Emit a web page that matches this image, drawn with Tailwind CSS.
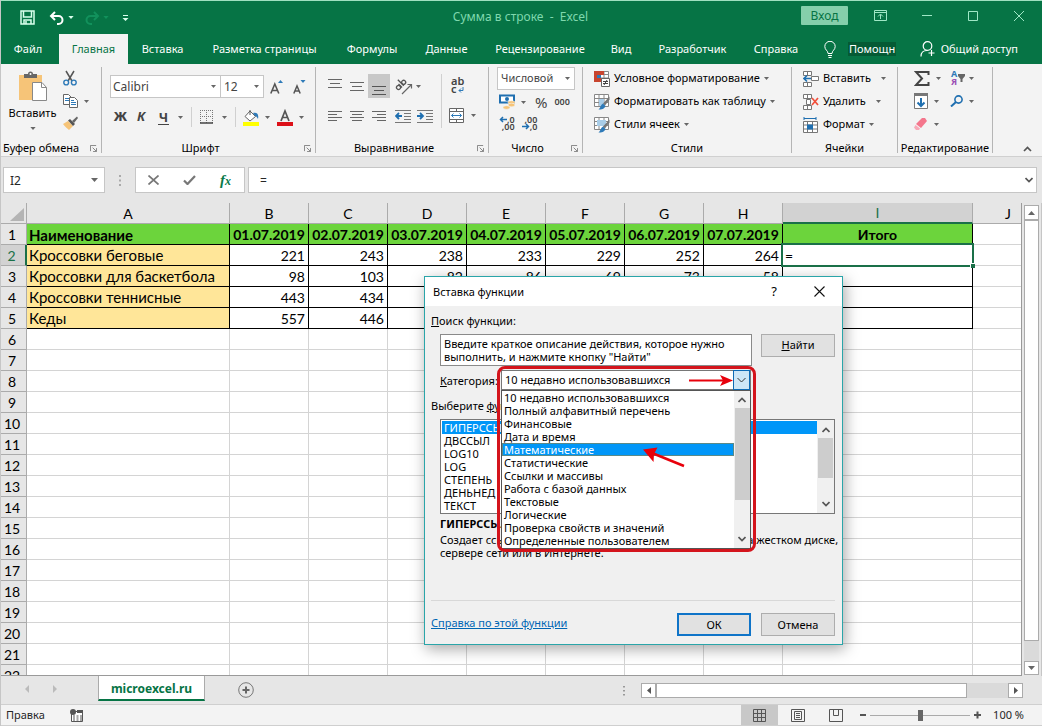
<!DOCTYPE html>
<html lang="ru">
<head>
<meta charset="utf-8">
<title>Сумма в строке - Excel</title>
<script src="https://cdn.jsdelivr.net/npm/@tailwindcss/browser@4"></script>
</head>
<body class="h-screen overflow-hidden bg-[#e6e6e6] font-['Noto_Sans','Open_Sans',sans-serif] text-xs text-[#262626]">

<!-- shared symbols -->
<svg class="hidden">
  <symbol id="caret" viewBox="0 0 7 4"><path d="M0 0h7L3.500 4z" fill="#666"/></symbol>
  <symbol id="launcher" viewBox="0 0 8 8"><path d="M.5 7V.5H7M3 3l4 4M7.500 3.500v4h-4" fill="none" stroke="#777"/></symbol>
  <symbol id="up" viewBox="0 0 8 6"><path d="M.5 5L4 1.500 7.500 5" fill="none" stroke="#555" stroke-width="1.700"/></symbol>
  <symbol id="down" viewBox="0 0 8 6"><path d="M.5 1L4 4.500 7.500 1" fill="none" stroke="#555" stroke-width="1.700"/></symbol>
</svg>

<div class="flex h-full flex-col border-l border-[#c6c6c6]">

  <!-- title bar -->
  <header class="flex-none border-t border-[#9fe0c0] bg-[#067445] text-white">
    <div class="relative flex h-[33px] items-center pl-[19px]">
      <button aria-label="Сохранить"><svg class="h-[15px] w-[15px]" viewBox="0 0 15 15"><path d="M1 1h13v13H1zM3.500 1v6h8V1M4 14v-4h7v4M6 11v3" fill="none" stroke="#d9ffec" stroke-width="1.500"/></svg></button>
      <button aria-label="Отменить" class="ml-[14px]"><svg class="h-[14px] w-[16px]" viewBox="0 0 16 14"><path d="M6 1L2 5l4 4M2 5h7.500a4 4 0 0 1 0 8H8" fill="none" stroke="#fff" stroke-width="2"/></svg></button>
      <svg class="ml-[3px] h-[3px] w-[6px]" viewBox="0 0 7 4"><path d="M0 0h7L3.500 4z" fill="#d9ffec"/></svg>
      <button aria-label="Вернуть" class="ml-[10px]"><svg class="h-[14px] w-[16px]" viewBox="0 0 16 14"><path d="M10 1l4 4-4 4M14 5H6.500a4 4 0 0 0 0 8H8" fill="none" stroke="#12915c" stroke-width="2"/></svg></button>
      <svg class="ml-[3px] h-[3px] w-[6px]" viewBox="0 0 7 4"><path d="M0 0h7L3.500 4z" fill="#12915c"/></svg>
      <button aria-label="Настройка панели" class="ml-[13px]"><svg class="h-[6px] w-[7px]" viewBox="0 0 7 6"><path d="M1 0h5v1H1zM.5 3h6L3.500 6z" fill="#d9ffec"/></svg></button>
      <h1 class="pointer-events-none absolute inset-x-0 top-[8px] pr-[2px] text-center whitespace-pre text-[#7fd8ae]">Сумма в строке  -  Excel</h1>
      <div class="ml-auto flex items-center pb-[4px]">
        <button class="mr-[26px] h-[19px] w-[47px] rounded-[1px] bg-[#85cfab] leading-[18px] text-[#067445]">Вход</button>
        <button aria-label="Параметры ленты" class="mr-[35px]"><svg class="h-[11px] w-[13px]" viewBox="0 0 13 11"><path d="M.5.5h12v10H.5zM.5 2.500h12M6.500 9V4.500M4 6.500l2.500-2.500L9 6.500" fill="none" stroke="#9fe8c6"/></svg></button>
        <button aria-label="Свернуть" class="mr-[36px]"><svg class="h-[11px] w-[10px]" viewBox="0 0 10 11"><path d="M0 5.500h10" stroke="#9fe8c6"/></svg></button>
        <button aria-label="Развернуть" class="mr-[36px]"><svg class="h-[10px] w-[10px]" viewBox="0 0 10 10"><path d="M.5.5h9v9h-9z" fill="none" stroke="#9fe8c6"/></svg></button>
        <button aria-label="Закрыть" class="mr-[18px]"><svg class="h-[10px] w-[10px]" viewBox="0 0 10 10"><path d="M0 0l10 10M10 0L0 10" fill="none" stroke="#9fe8c6"/></svg></button>
      </div>
    </div>
    <nav class="flex h-[30px] items-center text-[11px] whitespace-nowrap">
      <button class="w-[58px] pr-[4px]">Файл</button>
      <button class="h-full w-[69px] bg-[#f3f3f3] text-[#067445]">Главная</button>
      <button class="w-[69px]">Вставка</button>
      <button class="w-[135px]">Разметка страницы</button>
      <button class="w-[80px]">Формулы</button>
      <button class="w-[69px]">Данные</button>
      <button class="w-[118px]">Рецензирование</button>
      <button class="w-[44px]">Вид</button>
      <button class="w-[99px]">Разработчик</button>
      <button class="w-[68px]">Справка</button>
      <button class="ml-[14px] flex items-center gap-[12px]"><svg class="h-[17px] w-[12px]" viewBox="0 0 12 17"><path d="M4 12.500c0-3-3.200-3.500-3.200-7a5.200 5.200 0 0 1 10.400 0c0 3.500-3.200 4-3.200 7zM4 14.500h4M4.500 16.500h3" fill="none" stroke="#fff"/></svg><span class="bg-[#055a34] px-px leading-[14px]">Помощн</span></button>
      <button class="mr-[24px] ml-auto flex items-center gap-[6px]"><svg class="h-[16px] w-[15px]" viewBox="0 0 15 16"><path d="M1 15.500c0-4 2.500-6 6-6M11.500 9v6M8.500 12h6" fill="none" stroke="#fff" stroke-width="1.200"/><circle cx="7.500" cy="5" r="4.300" fill="none" stroke="#fff" stroke-width="1.200"/></svg><span>Общий доступ</span></button>
    </nav>
  </header>

  <!-- ribbon -->
  <section class="flex h-[93px] flex-none items-stretch overflow-hidden border-b border-[#d0d0d0] bg-[#f3f3f3] py-[3px] text-[11px] whitespace-nowrap text-black">

    <div class="flex w-[101px] flex-none flex-col border-r border-[#b5b5b5]">
      <div class="flex flex-1">
        <button class="flex w-[60px] flex-col items-center pt-[4px] pl-[3px]">
          <svg class="h-[32px] w-[30px]" viewBox="0 0 30 32"><path d="M1 4h23v25H1z" fill="#f6c478"/><path d="M6 7V3h4a2.500 2.500 0 0 1 5 0h4v4z" fill="#666"/><circle cx="12.500" cy="3" r="1" fill="#fff"/><path d="M14.500 11.500H24l4.500 5v13h-14z" fill="#fff" stroke="#888"/><path d="M23.500 11.500v5h5" fill="none" stroke="#888"/></svg>
          <span class="leading-[19px]">Вставить</span>
          <svg class="mt-[5px] h-[3px] w-[6px]"><use href="#caret"/></svg>
        </button>
        <div class="flex flex-col gap-[8px] pt-[3px] pl-[2px]">
          <button aria-label="Вырезать"><svg class="h-[16px] w-[14px]" viewBox="0 0 14 16"><path d="M3 1l6 10M11 1L5 11" stroke="#555" stroke-width="1.500" fill="none"/><circle cx="3.200" cy="12.500" r="2.400" fill="none" stroke="#2e7ab8" stroke-width="1.400"/><circle cx="10.800" cy="12.500" r="2.400" fill="none" stroke="#2e7ab8" stroke-width="1.400"/></svg></button>
          <button aria-label="Копировать" class="flex items-center gap-[6px]"><svg class="h-[14px] w-[15px]" viewBox="0 0 15 14"><path d="M.5.5h5l3 3v7h-8z" fill="#fff" stroke="#666"/><path d="M2 4.500h4M2 6.500h4" stroke="#2e7ab8"/><path d="M6.500 3.500h5l3 3v7h-8z" fill="#fff" stroke="#666"/><path d="M8 8.500h5M8 10.500h5M8 6.500h3" stroke="#2e7ab8"/></svg><svg class="h-[3px] w-[5px]"><use href="#caret"/></svg></button>
          <button aria-label="Формат по образцу"><svg class="h-[14px] w-[15px]" viewBox="0 0 15 14"><path d="M0 8l5-3 5 5-4 4c-1-1-4-3-6-6z" fill="#f6c478"/><path d="M5 4.500l2-1.500 5 5-2 2z" fill="#555"/><path d="M9 5l5-4.500 1 1.500-4 5z" fill="#666"/></svg></button>
        </div>
      </div>
      <div class="flex h-[10px] items-center justify-between pr-[4px] pl-[2px]"><span>Буфер обмена</span><svg class="h-[7px] w-[7px]"><use href="#launcher"/></svg></div>
    </div>

    <div class="flex w-[214px] flex-none flex-col border-r border-[#b5b5b5]">
      <div class="flex flex-1 flex-col gap-[9px] pt-[8px] pl-[8px]">
        <div class="flex h-[23px] items-center text-xs">
          <div class="relative h-full w-[111px] border border-[#c6c6c6] bg-white"><select aria-label="Шрифт" class="h-full w-full appearance-none pl-[2px] text-[#444]"><option>Calibri</option></select><svg class="pointer-events-none absolute top-[9px] right-[4px] h-[3px] w-[5px]"><use href="#caret"/></svg></div>
          <div class="relative h-full w-[43px] border border-l-0 border-[#c6c6c6] bg-white"><select aria-label="Размер" class="h-full w-full appearance-none pl-[3px] text-[#444]"><option>12</option></select><svg class="pointer-events-none absolute top-[9px] right-[4px] h-[3px] w-[5px]"><use href="#caret"/></svg></div>
          <button aria-label="Увеличить шрифт" class="ml-[6px]"><svg class="h-[14px] w-[13px]" viewBox="0 0 13 14"><path d="M.8 13.500L4.800 4l4 9.500M2.200 10.500h5" fill="none" stroke="#555" stroke-width="1.600"/><path d="M8 3h5l-2.500-3z" fill="#2e7ab8"/></svg></button>
          <button aria-label="Уменьшить шрифт" class="ml-[10px]"><svg class="h-[14px] w-[13px]" viewBox="0 0 13 14"><path d="M.8 13.500L4 6l3.200 7.500M2 11h4" fill="none" stroke="#555" stroke-width="1.500"/><path d="M7.500 0h5L10 3z" fill="#2e7ab8"/></svg></button>
        </div>
        <div class="flex h-[20px] items-center">
          <button class="ml-[3px] w-[15px] text-[13px] font-extrabold text-[#444]">Ж</button>
          <button class="ml-[7px] w-[12px] text-[13px] font-bold text-[#444] italic">К</button>
          <button class="ml-[11px] w-[11px] border-b border-[#444] text-[13px] leading-[14px] font-bold text-[#444]">Ч</button>
          <svg class="ml-[9px] h-[3px] w-[5px]"><use href="#caret"/></svg>
          <span class="ml-[8px] h-full w-px bg-[#d0d0d0]"></span>
          <button aria-label="Границы" class="ml-[8px]"><svg class="h-[14px] w-[14px]" viewBox="0 0 14 14"><path d="M.5 0v13M6.500 0v13M12.500 0v13M0 .5h13M0 6.500h13" stroke="#777" stroke-dasharray="1 1"/><path d="M0 13h13" stroke="#444" stroke-width="1.500"/></svg></button>
          <svg class="ml-[8px] h-[3px] w-[5px]"><use href="#caret"/></svg>
          <span class="ml-[8px] h-full w-px bg-[#d0d0d0]"></span>
          <button aria-label="Цвет заливки" class="ml-[7px]"><svg class="h-[17px] w-[17px]" viewBox="0 0 17 17"><path d="M7 2l5.500 5.500L7 12 2 7.500z" fill="#fff" stroke="#666"/><path d="M7 6V1" stroke="#555"/><path d="M10 4c4-1 6 1 5 6-1-2-2-3-3-3z" fill="#2e7ab8"/><path d="M0 13h16v4H0z" fill="#ff0"/></svg></button>
          <svg class="ml-[5px] h-[3px] w-[5px]"><use href="#caret"/></svg>
          <button aria-label="Цвет шрифта" class="ml-[7px]"><svg class="h-[17px] w-[16px]" viewBox="0 0 16 17"><path d="M4 12l4-10 4 10M5.500 8.500h5" fill="none" stroke="#555" stroke-width="1.700"/><path d="M0 13h16v4H0z" fill="#dc1018"/></svg></button>
          <svg class="ml-[6px] h-[3px] w-[5px]"><use href="#caret"/></svg>
        </div>
      </div>
      <div class="flex h-[10px] items-center pr-[4px]"><span class="flex-1 pr-[5px] text-center">Шрифт</span><svg class="h-[7px] w-[7px]"><use href="#launcher"/></svg></div>
    </div>

    <div class="flex w-[173px] flex-none flex-col border-r border-[#b5b5b5]">
      <div class="flex flex-1 items-start pt-[7px]">
        <div class="flex w-[125px] flex-col gap-[11px] pl-[8px]">
          <div class="flex h-[24px] items-center">
            <button aria-label="По верхнему краю" class="flex h-full w-[22px] items-center justify-center"><svg class="mb-[6px] h-[9px] w-[14px]" viewBox="0 0 14 9"><path d="M0 .5h14M2 4.500h10M0 8.500h14" stroke="#666"/></svg></button>
            <button aria-label="По середине" class="flex h-full w-[22px] items-center justify-center"><svg class="h-[9px] w-[14px]" viewBox="0 0 14 9"><path d="M0 .5h14M2 4.500h10M0 8.500h14" stroke="#666"/></svg></button>
            <button aria-label="По нижнему краю" class="flex h-full w-[22px] items-center justify-center bg-[#c8c8c8]"><svg class="mt-[8px] h-[9px] w-[14px]" viewBox="0 0 14 9"><path d="M0 .5h14M2 4.500h10M0 8.500h14" stroke="#555"/></svg></button>
            <button aria-label="Ориентация" class="ml-[5px] flex items-center gap-[3px]"><svg class="h-[18px] w-[18px]" viewBox="0 0 18 18"><path d="M7 17L16.500 7.500M12.500 7.500h4v4" fill="none" stroke="#666" stroke-width="1.200"/><g transform="rotate(-45 6 8)" fill="none" stroke="#555" stroke-width="1.300"><circle cx="2.500" cy="8" r="2"/><path d="M5 5.500V10.500M7.500 2v8.500"/><circle cx="9.800" cy="8" r="2"/></g></svg><svg class="h-[3px] w-[5px]"><use href="#caret"/></svg></button>
          </div>
          <div class="flex h-[14px] items-center">
            <button aria-label="По левому краю" class="flex w-[22px] justify-center"><svg class="h-[11px] w-[14px]" viewBox="0 0 14 11"><path d="M0 .5h14M0 3.500h9M0 6.500h14M0 9.500h9" stroke="#666"/></svg></button>
            <button aria-label="По центру" class="flex w-[22px] justify-center"><svg class="h-[11px] w-[14px]" viewBox="0 0 14 11"><path d="M0 .5h14M2 3.500h10M0 6.500h14M2 9.500h10" stroke="#666"/></svg></button>
            <button aria-label="По правому краю" class="flex w-[22px] justify-center"><svg class="h-[11px] w-[14px]" viewBox="0 0 14 11"><path d="M0 .5h14M5 3.500h9M0 6.500h14M5 9.500h9" stroke="#666"/></svg></button>
            <button aria-label="Уменьшить отступ" class="ml-[5px]"><svg class="h-[13px] w-[17px]" viewBox="0 0 17 13"><path d="M0 .5h16M9 3.500h7M9 6.500h7M9 9.500h7M0 12.500h16" stroke="#777"/><path d="M7 6H1M4 3L1 6l3 3" fill="none" stroke="#1f6fb0" stroke-width="1.800"/></svg></button>
            <button aria-label="Увеличить отступ" class="ml-[5px]"><svg class="h-[13px] w-[17px]" viewBox="0 0 17 13"><path d="M0 .5h16M9 3.500h7M9 6.500h7M9 9.500h7M0 12.500h16" stroke="#777"/><path d="M0 6h6M3 3l3 3-3 3" fill="none" stroke="#1f6fb0" stroke-width="1.800"/></svg></button>
          </div>
        </div>
        <div class="flex h-[54px] flex-col items-start border-l border-[#d0d0d0] pl-[7px]">
          <button class="mb-[12px] ml-[2px] flex h-[22px] flex-col items-start pt-[3px] text-[11px] leading-[8px] font-semibold text-[#444]"><span>ab</span><span class="flex items-center">c<svg class="ml-px h-[7px] w-[6px]" viewBox="0 0 6 7"><path d="M5 1v3.500H1M3 2.500l-2 2 2 2" fill="none" stroke="#2e7ab8"/></svg></span></button>
          <button aria-label="Объединить" class="flex items-center gap-[6px]"><svg class="h-[15px] w-[16px]" viewBox="0 0 16 15"><path d="M.5.5h14v14H.5zM.5 3.500h14M.5 11.500h14M7.500.5v3M7.500 11.500v3" fill="#fff" stroke="#666"/><path d="M2.500 7.500h10M4.500 5.500l-2 2 2 2M10.500 5.500l2 2-2 2" fill="none" stroke="#2e7ab8"/></svg><svg class="h-[3px] w-[5px]"><use href="#caret"/></svg></button>
        </div>
      </div>
      <div class="flex h-[10px] items-center pr-[4px]"><span class="flex-1 pr-[5px] text-center">Выравнивание</span><svg class="h-[7px] w-[7px]"><use href="#launcher"/></svg></div>
    </div>

    <div class="flex w-[94px] flex-none flex-col border-r border-[#b5b5b5]">
      <div class="flex flex-1 flex-col pl-[8px]">
        <div class="relative h-[23px] w-[78px] border border-[#c6c6c6] bg-white"><select aria-label="Числовой формат" class="h-full w-full appearance-none pl-[3px] text-[#444]"><option>Числовой</option></select><svg class="pointer-events-none absolute top-[9px] right-[4px] h-[3px] w-[5px]"><use href="#caret"/></svg></div>
        <div class="mt-[2px] flex h-[20px] items-center text-[#444]">
          <button aria-label="Денежный формат" class="ml-[2px]"><svg class="h-[16px] w-[17px]" viewBox="0 0 17 16"><path d="M1 1.500h14v7H1z" fill="#fff" stroke="#1f6fb0" stroke-width="2"/><circle cx="8" cy="5" r="2" fill="#1f6fb0"/><ellipse cx="12.500" cy="8.500" rx="3.500" ry="1.800" fill="#f6c478" stroke="#f3f3f3" stroke-width=".6"/><ellipse cx="12.500" cy="11" rx="3.500" ry="1.800" fill="#f6c478" stroke="#f3f3f3" stroke-width=".6"/><ellipse cx="7.500" cy="13.500" rx="3.500" ry="1.800" fill="#f6c478" stroke="#f3f3f3" stroke-width=".6"/></svg></button>
          <svg class="ml-[5px] h-[3px] w-[5px]"><use href="#caret"/></svg>
          <button class="ml-[9px] text-[15px]">%</button>
          <button class="ml-[7px] text-[9px] font-semibold">000</button>
        </div>
        <div class="flex gap-[7px] pt-[4px] pl-[2px] text-[9px] leading-[7px] font-semibold text-[#444]">
          <button class="flex flex-col items-end"><span class="flex"><svg class="h-[7px] w-[8px]" viewBox="0 0 8 7"><path d="M8 3.500H1.500M4 1L1.500 3.500 4 6" fill="none" stroke="#1f6fb0" stroke-width="1.500"/></svg>,0</span><span>,00</span></button>
          <button class="flex flex-col items-end"><span>,00</span><span class="flex"><svg class="h-[7px] w-[8px]" viewBox="0 0 8 7"><path d="M0 3.500h6.500M4 1l2.500 2.500L4 6" fill="none" stroke="#1f6fb0" stroke-width="1.500"/></svg>,0</span></button>
        </div>
      </div>
      <div class="flex h-[10px] items-center pr-[4px]"><span class="flex-1 pr-[5px] text-center">Число</span><svg class="h-[7px] w-[7px]"><use href="#launcher"/></svg></div>
    </div>

    <div class="flex w-[209px] flex-none flex-col border-r border-[#b5b5b5]">
      <div class="flex flex-1 flex-col pl-[11px]">
        <button class="flex h-[23px] items-center gap-[4px]"><svg class="h-[16px] w-[16px]" viewBox="0 0 16 16"><path d="M.5.5h14v10H.5zM.5 3.500h14M.5 7h14M5 .5v10M10 .5v10" fill="#fff" stroke="#888"/><path d="M0 0h5v4H0zM0 7h8v4H0z" fill="#c8452f"/><path d="M5 0h5v4H5zM0 4h3v3H0z" fill="#c8452f"/><path d="M3 4h4v3H3z" fill="#2e7ab8"/><path d="M7.500 7.500h8v8h-8z" fill="#fff" stroke="#666"/><path d="M9 10.500h5M9 12.500h5M13 9l-3 5" stroke="#444"/></svg><span>Условное форматирование</span><svg class="h-[3px] w-[5px]"><use href="#caret"/></svg></button>
        <button class="flex h-[23px] items-center gap-[4px]"><svg class="h-[16px] w-[16px]" viewBox="0 0 16 16"><path d="M.5.5h14v12H.5zM.5 4.500h14M.5 8.500h14M5 .5v12M10 .5v12" fill="#fff" stroke="#888"/><path d="M5 5h5v7H5z" fill="#a9cde8"/><path d="M15.500 2.500L9 9.500l2 2 4.500-6z" fill="#777"/><path d="M9 9.500l2.500 2.500c-1 3-4 3.500-7 3.500 2-1.500 2-4.500 4.500-6z" fill="#2e7ab8"/></svg><span>Форматировать как таблицу</span><svg class="h-[3px] w-[5px]"><use href="#caret"/></svg></button>
        <button class="flex h-[23px] items-center gap-[4px]"><svg class="h-[16px] w-[16px]" viewBox="0 0 16 16"><path d="M.5.5h14v12H.5zM.5 4.500h14M.5 8.500h14M5 .5v12M10 .5v12" fill="#fff" stroke="#888"/><path d="M3 3h9v6H3z" fill="#a9cde8"/><path d="M15.500 2.500L9 9.500l2 2 4.500-6z" fill="#777"/><path d="M9 9.500l2.500 2.500c-1 3-4 3.500-7 3.500 2-1.500 2-4.500 4.500-6z" fill="#2e7ab8"/></svg><span>Стили ячеек</span><svg class="h-[3px] w-[5px]"><use href="#caret"/></svg></button>
      </div>
      <div class="flex h-[10px] items-center justify-center"><span>Стили</span></div>
    </div>

    <div class="flex w-[106px] flex-none flex-col border-r border-[#b5b5b5]">
      <div class="flex flex-1 flex-col pl-[11px]">
        <button class="flex h-[23px] items-center gap-[4px]"><svg class="h-[16px] w-[16px]" viewBox="0 0 16 16"><path d="M.5.500h8v4h-8zM4.500.500v4M.5 11.500h8v4h-8zM4.500 11.500v4M8.500 5.500h7v4h-7z" fill="#fff" stroke="#777"/><path d="M8 7.500H1M4 4.500l-3 3 3 3" fill="none" stroke="#1f6fb0" stroke-width="1.600"/></svg><span>Вставить</span><svg class="ml-[6px] h-[3px] w-[5px]"><use href="#caret"/></svg></button>
        <button class="flex h-[23px] items-center gap-[4px]"><svg class="h-[16px] w-[16px]" viewBox="0 0 16 16"><path d="M.5.500h8v4h-8zM4.500.500v4M.5 11.500h8v4h-8zM4.500 11.500v4M3.500 5.500h4v5h-4z" fill="#fff" stroke="#777"/><path d="M9 4l6 7M15 4l-6 7" stroke="#f0503c" stroke-width="1.700"/></svg><span>Удалить</span><svg class="ml-[6px] h-[3px] w-[5px]"><use href="#caret"/></svg></button>
        <button class="flex h-[23px] items-center gap-[4px]"><svg class="h-[16px] w-[16px]" viewBox="0 0 16 16"><path d="M.5 4.500h14v11H.5zM.5 8h14M.5 12h14M4.500 4.500v11M9.500 4.500v11" fill="#fff" stroke="#777"/><path d="M4 7.500h6v5H4z" fill="#1f6fb0"/><path d="M1 1.500h12M1 0v3M13 0v3" stroke="#1f6fb0"/></svg><span>Формат</span><svg class="h-[3px] w-[5px]"><use href="#caret"/></svg></button>
      </div>
      <div class="flex h-[10px] items-center justify-center"><span>Ячейки</span></div>
    </div>

    <div class="flex w-[95px] flex-none flex-col border-r border-[#b5b5b5]">
      <div class="grid flex-1 grid-cols-[36px_40px] grid-rows-[22px_24px_22px] items-center pl-[16px]">
        <button aria-label="Сумма" class="flex items-center gap-[6px]"><svg class="h-[15px] w-[16px]" viewBox="0 0 16 15"><path d="M14.500 4V1H2l6 6.500L2 14h12.500v-3" fill="none" stroke="#444" stroke-width="2"/></svg><svg class="h-[3px] w-[5px]"><use href="#caret"/></svg></button>
        <button aria-label="Сортировка" class="flex items-center"><span class="flex w-[8px] flex-col text-[9px] leading-[8px] font-bold"><span class="text-[#2e7ab8]">А</span><span class="text-[#9b4fb5]">Я</span></span><svg class="h-[8px] w-[7px]" viewBox="0 0 7 8"><path d="M0 0h7v2L4.500 5v3h-2V5L0 2z" fill="#666"/></svg><svg class="ml-[4px] h-[3px] w-[5px]"><use href="#caret"/></svg></button>
        <button aria-label="Заполнить" class="flex items-center gap-[6px]"><svg class="h-[16px] w-[14px]" viewBox="0 0 14 16"><path d="M.5.500h13v15H.5z" fill="#fff" stroke="#777"/><path d="M0 0h14v3H0z" fill="#777"/><path d="M7 5v8M3.500 9.500L7 13l3.500-3.500" fill="none" stroke="#1f6fb0" stroke-width="2"/></svg><svg class="h-[3px] w-[5px]"><use href="#caret"/></svg></button>
        <button aria-label="Найти и выделить" class="flex items-center gap-[6px]"><svg class="h-[12px] w-[13px]" viewBox="0 0 13 12"><circle cx="8.500" cy="4.500" r="3.600" fill="none" stroke="#1f6fb0" stroke-width="1.600"/><path d="M6 7l-5 4.500" stroke="#1f6fb0" stroke-width="2"/></svg><svg class="h-[3px] w-[5px]"><use href="#caret"/></svg></button>
        <button aria-label="Очистить" class="flex items-center gap-[6px]"><svg class="h-[12px] w-[14px]" viewBox="0 0 14 12"><path d="M8 0h3l2 3-6 7-5-4z" fill="#f4768c"/><path d="M1.500 7l4.500 3.500L5 12H2L0 9.500z" fill="#f8a9b7"/></svg><svg class="h-[3px] w-[5px]"><use href="#caret"/></svg></button>
      </div>
      <div class="flex h-[10px] items-center justify-center"><span>Редактирование</span></div>
    </div>
    <button aria-label="Свернуть ленту" class="mt-auto mr-[10px] mb-px ml-auto"><svg class="h-[6px] w-[9px]"><use href="#up"/></svg></button>
  </section>

  <!-- formula bar -->
  <section class="flex h-[46px] flex-none items-center pr-[5px] pl-[2px]">
    <div class="relative h-[26px] w-[102px] border border-[#c6c6c6] bg-white"><input aria-label="Имя" value="I2" class="h-full w-full pl-[6px]"><svg class="pointer-events-none absolute top-[10px] right-[6px] h-[4px] w-[7px]"><use href="#caret"/></svg></div>
    <svg class="ml-[14px] h-[11px] w-[2px]" viewBox="0 0 2 11"><path d="M0 0h2v2H0zM0 4.500h2v2H0zM0 9h2v2H0z" fill="#aaa"/></svg>
    <div class="ml-[14px] flex h-[26px] w-[110px] items-center border border-[#c6c6c6] bg-white">
      <button aria-label="Отмена ввода" class="ml-[12px]"><svg class="h-[10px] w-[11px]" viewBox="0 0 11 10"><path d="M.5.5l10 9M10.500.5l-10 9" stroke="#777" stroke-width="1.700"/></svg></button>
      <button aria-label="Ввод" class="ml-[24px]"><svg class="h-[10px] w-[13px]" viewBox="0 0 13 10"><path d="M1 5.500L4.500 9 12 1" fill="none" stroke="#777" stroke-width="2.200"/></svg></button>
      <button class="ml-[24px] font-['Liberation_Serif',serif] text-[15px] leading-[14px] font-bold text-[#0a7a4a] italic">f<span class="text-[12px]">x</span></button>
    </div>
    <div class="relative ml-[3px] h-[26px] flex-1 border border-[#c6c6c6] bg-white"><input aria-label="Строка формул" value="=" class="h-full w-full pl-[11px]"><svg class="pointer-events-none absolute top-[9px] right-[3px] h-[6px] w-[8px]"><use href="#down"/></svg></div>
  </section>

  <!-- sheet -->
  <main class="flex min-h-0 flex-1">
    <div class="min-w-0 flex-1 overflow-hidden border-r border-b border-[#9a9a9a]">
      <table class="w-full table-fixed border-separate border-spacing-0 font-['Lato','Noto_Sans',sans-serif] text-[14px] leading-[18px] text-black">
        <colgroup><col class="w-[26px]"><col class="w-[203px]"><col class="w-[79px]"><col class="w-[79px]"><col class="w-[79px]"><col class="w-[79px]"><col class="w-[79px]"><col class="w-[79px]"><col class="w-[79px]"><col class="w-[190px]"><col></colgroup>
        <thead id="head"></thead>
        <tbody id="rows"></tbody>
      </table>
    </div>
    <div class="flex w-[20px] flex-none flex-col items-center border-r border-[#c6c6c6] pt-[2px] pb-px">
      <button aria-label="Вверх" class="flex h-[15px] w-[15px] items-center justify-center border border-[#ababab] bg-white"><svg class="h-[4px] w-[7px] rotate-180"><use href="#caret"/></svg></button>
      <div class="flex w-[15px] flex-1 flex-col bg-[#dadada]"><div class="h-[421px] border border-[#ababab] bg-white"></div></div>
      <button aria-label="Вниз" class="flex h-[14px] w-[15px] items-center justify-center border border-[#ababab] bg-white"><svg class="h-[4px] w-[7px]"><use href="#caret"/></svg></button>
    </div>
  </main>

  <!-- sheet tabs -->
  <section class="flex h-[28px] flex-none items-start pr-[19px]">
    <button aria-label="Предыдущий лист" class="mt-[9px] ml-[24px]"><svg class="h-[8px] w-[4px]" viewBox="0 0 4 8"><path d="M4 0v8L0 4z" fill="#bbb"/></svg></button>
    <button aria-label="Следующий лист" class="mt-[9px] ml-[24px]"><svg class="h-[8px] w-[4px]" viewBox="0 0 4 8"><path d="M0 0v8l4-4z" fill="#bbb"/></svg></button>
    <button class="ml-[41px] h-[25px] w-[107px] border-x border-b-2 border-x-[#ababab] border-b-[#067445] bg-white pt-[3px] font-bold text-[#067445]">microexcel.ru</button>
    <button aria-label="Новый лист" class="mt-[6px] ml-[33px]"><svg class="h-[16px] w-[16px]" viewBox="0 0 16 16"><circle cx="8" cy="8" r="7.300" fill="none" stroke="#777"/><path d="M4.500 8h7M8 4.500v7" stroke="#666" stroke-width="2"/></svg></button>
    <div class="mt-[7px] ml-auto flex items-center">
      <svg class="mr-[16px] h-[10px] w-[2px]" viewBox="0 0 2 10"><path d="M0 0h2v1.500H0zM0 4h2v1.500H0zM0 8h2v1.500H0z" fill="#999"/></svg>
      <button aria-label="Влево" class="flex h-[15px] w-[15px] items-center justify-center border border-[#ababab] bg-white"><svg class="h-[7px] w-[4px]" viewBox="0 0 4 7"><path d="M4 0v7L0 3.500z" fill="#555"/></svg></button>
      <div class="flex h-[15px] w-[352px] bg-[#dadada]"><div class="w-[311px] border border-[#ababab] bg-white"></div></div>
      <button aria-label="Вправо" class="flex h-[15px] w-[15px] items-center justify-center border border-[#ababab] bg-white"><svg class="h-[7px] w-[4px]" viewBox="0 0 4 7"><path d="M0 0v7l4-3.500z" fill="#555"/></svg></button>
    </div>
  </section>

  <!-- status bar -->
  <footer class="flex h-[22px] flex-none items-stretch border-y border-[#cfcfcf] bg-[#f3f3f3] text-[11px]">
    <span class="ml-[5px] self-center">Правка</span>
    <button aria-label="Запись макроса" class="ml-[25px] self-center"><svg class="h-[13px] w-[13px]" viewBox="0 0 13 13"><path d="M1.500 4v8.500h11V2.500H5" fill="#fff" stroke="#555"/><path d="M7 1h6v3H7z" fill="#555"/><circle cx="3" cy="3" r="3" fill="#555"/><path d="M3 7h2M6.500 7h2M10 7h2M3 9h2M6.500 9h2M10 9h2M3 11h2M6.500 11h2M10 11h2" stroke="#555"/></svg></button>
    <div class="ml-auto flex items-stretch">
      <button aria-label="Обычный" class="flex w-[37px] items-center justify-center bg-[#c8c8c8]"><svg class="h-[13px] w-[13px]" viewBox="0 0 13 13"><path d="M.5.5h12v12H.5zM.5 4.500h12M.5 8.500h12M4.500.5v12M8.500.5v12" fill="none" stroke="#555"/></svg></button>
      <button aria-label="Разметка страницы" class="flex w-[39px] items-center justify-center"><svg class="h-[13px] w-[14px]" viewBox="0 0 14 13"><path d="M.5.5h13v12H.5zM3.500 2.500h7v8h-7zM5 4.500h4M5 6.500h4M5 8.500h4" fill="none" stroke="#555"/></svg></button>
      <button aria-label="Страничный режим" class="flex w-[37px] items-center justify-center"><svg class="h-[13px] w-[14px]" viewBox="0 0 14 13"><path d="M.5.5h13v12H.5zM4.500.5v6h5v-6" fill="none" stroke="#555"/></svg></button>
      <button aria-label="Уменьшить" class="ml-[6px] self-center"><svg class="h-[8px] w-[6px]" viewBox="0 0 6 8"><path d="M0 4h6" stroke="#555" stroke-width="2"/></svg></button>
      <input type="range" aria-label="Масштаб" value="50" class="ml-[4px] w-[100px] appearance-none self-center bg-transparent [&::-webkit-slider-runnable-track]:h-px [&::-webkit-slider-runnable-track]:bg-[#aaa] [&::-webkit-slider-thumb]:-mt-[5px] [&::-webkit-slider-thumb]:h-[11px] [&::-webkit-slider-thumb]:w-[5px] [&::-webkit-slider-thumb]:appearance-none [&::-webkit-slider-thumb]:bg-[#666]">
      <button aria-label="Увеличить" class="ml-[4px] self-center"><svg class="h-[8px] w-[7px]" viewBox="0 0 7 8"><path d="M0 4h7M3.500.5v7" stroke="#555" stroke-width="2"/></svg></button>
      <span class="mr-[18px] ml-[12px] self-center">100 %</span>
    </div>
  </footer>
</div>

<!-- function dialog -->
<div role="dialog" aria-label="Вставка функции" class="absolute top-[276px] left-[424px] w-[419px] border border-[#2aa5a9] bg-[#f0f0f0] text-[11px] leading-[13px] text-black shadow-[2px_4px_14px_rgba(0,0,0,0.35)]">
  <div class="flex h-[29px] items-center bg-white pl-[8px]">
    <span>Вставка функции</span>
    <button class="ml-auto text-[13px]">?</button>
    <button aria-label="Закрыть" class="mr-[17px] ml-[37px]"><svg class="h-[11px] w-[11px]" viewBox="0 0 11 11"><path d="M.5.5l10 10M10.500.5l-10 10" stroke="#111" stroke-width="1.100"/></svg></button>
  </div>
  <div class="pt-[8px] pr-[7px] pb-[8px] pl-[6px]">
    <label for="q" class="block"><u>П</u>оиск функции:</label>
    <div class="mt-[7px] flex items-start justify-between pl-[9px]">
      <textarea id="q" class="block h-[32px] w-[312px] resize-none overflow-hidden border border-[#8a8a8a] bg-white px-[3px] pt-[2px] whitespace-pre">Введите краткое описание действия, которое нужно
выполнить, и нажмите кнопку "Найти"</textarea>
      <button class="h-[23px] w-[74px] border border-[#adadad] bg-[#e1e1e1] pb-[2px]"><u>Н</u>айти</button>
    </div>
    <div class="relative mt-[4px] flex h-[20px] items-center pl-[9px]">
      <label for="cat" class="w-[61px]"><u>К</u>атегория:</label>
      <div class="flex h-[20px] w-[250px] items-center border border-[#777] bg-white">
        <select id="cat" class="h-full flex-1 appearance-none pb-[2px] pl-[3px]"><option>10 недавно использовавшихся</option></select>
        <svg class="h-[11px] w-[44px]" viewBox="0 0 44 11"><path d="M0 5.500h36" stroke="#e8000b" stroke-width="2"/><path d="M44 5.500L31 0l3 5.500L31 11z" fill="#e8000b"/></svg>
        <span class="flex h-[20px] w-[17px] items-center justify-center border border-[#0f6ab4] bg-[#cde6f7]"><svg class="h-[6px] w-[9px]" viewBox="0 0 9 6"><path d="M.5 1l4 4 4-4" fill="none" stroke="#333"/></svg></span>
      </div>
      <!-- open category list -->
      <div class="absolute top-[20px] left-[70px] z-10 flex h-[159px] w-[250px] border border-[#555] bg-white">
        <ul role="listbox" aria-label="Категория" class="flex-1 whitespace-nowrap [&>li]:h-[13px] [&>li]:pl-[2px]">
          <li role="option">10 недавно использовавшихся</li><li role="option">Полный алфавитный перечень</li><li role="option">Финансовые</li><li role="option">Дата и время</li><li role="option" aria-selected="true" class="bg-[#0096f8] text-white outline outline-[#5a8a88] -outline-offset-1">Математические</li><li role="option">Статистические</li><li role="option">Ссылки и массивы</li><li role="option">Работа с базой данных</li><li role="option">Текстовые</li><li role="option">Логические</li><li role="option">Проверка свойств и значений</li><li role="option">Определенные пользователем</li>
        </ul>
        <div class="flex w-[16px] flex-col items-center bg-[#f0f0f0]"><svg class="mt-[6px] mb-[5px] h-[6px] w-[8px]"><use href="#up"/></svg><div class="h-[92px] w-[15px] bg-[#cdcdcd]"></div><svg class="mt-auto mb-[6px] h-[6px] w-[8px]"><use href="#down"/></svg></div>
      </div>
      <div class="pointer-events-none absolute -top-[4px] left-[66px] z-20 h-[186px] w-[259px] rounded-[8px] border-3 border-[#d4141c]"></div>
      <svg class="pointer-events-none absolute top-[75px] left-[211px] z-20 h-[28px] w-[44px]" viewBox="0 0 44 28"><path d="M10 8l32 13" stroke="#e8000b" stroke-width="2.500"/><path d="M1 4.500L15.500 2.500 12 9l-.5 8z" fill="#e8000b"/></svg>
    </div>
    <span class="mt-[9px] block">Выберите <u>ф</u>ункцию:</span>
    <div class="mt-[7px] ml-[9px] flex h-[95px] border border-[#777] bg-white">
      <ul role="listbox" aria-label="Функция" class="flex-1 pt-px pl-px [&>li]:h-[13px] [&>li]:pl-[2px]">
        <li role="option" aria-selected="true" class="bg-[#0096f8] text-white">ГИПЕРССЫЛКА</li><li role="option">ДВССЫЛ</li><li role="option">LOG10</li><li role="option">LOG</li><li role="option">СТЕПЕНЬ</li><li role="option">ДЕНЬНЕД</li><li role="option">ТЕКСТ</li>
      </ul>
      <div class="flex w-[17px] flex-col items-center bg-[#f0f0f0]"><svg class="mt-[7px] mb-[5px] h-[6px] w-[8px]"><use href="#up"/></svg><div class="h-[40px] w-[15px] bg-[#cdcdcd]"></div><svg class="mt-auto mb-[6px] h-[6px] w-[8px]"><use href="#down"/></svg></div>
    </div>
    <p class="mt-[3px] pl-[9px] font-bold">ГИПЕРССЫЛКА(адрес;имя)</p>
    <p class="mt-[3px] h-[67px] pl-[9px] whitespace-nowrap">Создает ссылку, открывающую документ, находящийся на жестком диске,<br>сервере сети или в Интернете.</p>
    <div class="flex items-center border-t border-[#d8d8d8] pt-[12px]">
      <a href="#" class="mb-[4px] text-[#0066b4] underline">Справка по этой функции</a>
      <button class="ml-auto h-[23px] w-[74px] border-2 border-[#0f74c8] bg-[#e1e1e1]">ОК</button>
      <button class="ml-[10px] h-[23px] w-[74px] border border-[#adadad] bg-[#e1e1e1]">Отмена</button>
    </div>
  </div>
</div>

<script>
  const data = [
    ['Наименование','01.07.2019','02.07.2019','03.07.2019','04.07.2019','05.07.2019','06.07.2019','07.07.2019','Итого'],
    ['Кроссовки беговые',221,243,238,233,229,252,264,'='],
    ['Кроссовки для баскетбола',98,103,82,86,69,73,58,''],
    ['Кроссовки теннисные',443,434,421,437,415,428,440,''],
    ['Кеды',557,446,512,498,503,487,521,'']
  ];
  const letters = 'ABCDEFGHI'.split('');
  document.getElementById('head').innerHTML =
    '<tr class="h-[21px]"><th class="border-r border-b border-[#ababab] p-0"><svg class="mt-[2px] ml-[9px] h-[13px] w-[14px]" viewBox="0 0 14 13"><path d="M14 0v13H0z" fill="#b4b4b4"/></svg></th>' +
    letters.map(l => l === 'I'
      ? '<th class="border-r border-b-2 border-r-[#ababab] border-b-[#1a7048] bg-[#d2d2d2] p-0 pt-px font-normal text-[#1a7048]">I</th>'
      : '<th class="border-r border-b border-[#ababab] p-0 pt-px font-normal">' + l + '</th>').join('') +
    '<th class="border-b border-[#ababab] p-0 pt-px pl-[32px] text-left font-normal">J</th></tr>';
  let html = '';
  for (let r = 1; r <= 23; r++) {
    html += r === 2
      ? '<tr class="h-[21px]"><th class="border-r-2 border-b border-r-[#1a7048] border-b-[#ababab] bg-[#d2d2d2] p-0 pt-px pr-[3px] text-center font-normal text-[#1a7048]">2</th>'
      : '<tr class="h-[21px]"><th class="border-r border-b border-[#ababab] bg-[#e6e6e6] p-0 pt-px pr-[3px] text-center font-normal">' + r + '</th>';
    for (let c = 0; c < 9; c++) {
      const v = data[r - 1] ? data[r - 1][c] : '';
      if (r === 1) html += c === 0
        ? '<td class="border-r border-b border-black bg-[#6cd43c] p-0 pt-px pl-[2px] text-[15px] leading-[18px] font-bold">' + v + '</td>'
        : '<td class="border-r border-b border-black bg-[#6cd43c] p-0 pt-px text-center font-bold">' + v + '</td>';
      else if (r > 5) html += '<td class="border-r border-b border-[#d4d4d4] bg-white p-0"></td>';
      else if (c === 0) html += '<td class="border-r border-b border-black bg-[#ffe699] p-0 pl-[2px] text-[15px] leading-[18px]">' + v + '</td>';
      else if (c === 8) html += r === 2
        ? '<td class="relative border-r border-b border-black bg-white p-0 pt-px pl-[2px]">=<span class="absolute -top-[2px] -right-[2px] -bottom-[2px] -left-[2px] border-2 border-[#1a7048]"></span><span class="absolute -right-[3px] -bottom-[3px] h-[5px] w-[5px] border-t border-l border-white bg-[#1a7048]"></span></td>'
        : '<td class="border-r border-b border-black bg-white p-0"></td>';
      else html += '<td class="border-r border-b border-black bg-white p-0 pt-px pr-[3px] text-right">' + v + '</td>';
    }
    html += '<td class="border-b border-[#d4d4d4] bg-white p-0"></td></tr>';
  }
  document.getElementById('rows').innerHTML = html;
</script>
</body>
</html>
